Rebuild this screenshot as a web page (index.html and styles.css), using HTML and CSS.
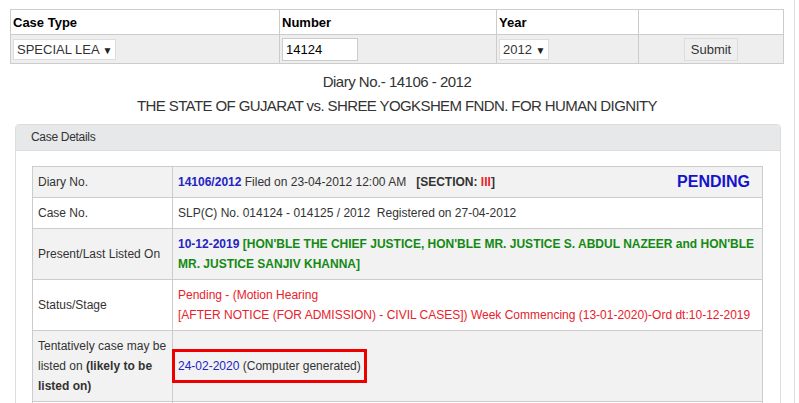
FILE: index.html
```html
<!DOCTYPE html>
<html lang="en">
<head>
    <meta charset="UTF-8">
    <title>Case Status</title>
    <link rel="stylesheet" href="styles.css">
</head>
<body>
    <div class="page">
        <!-- Search form -->
        <table class="search">
            <tr class="search-head">
                <th class="col-type">Case Type</th>
                <th class="col-num">Number</th>
                <th class="col-year">Year</th>
                <th></th>
            </tr>
            <tr class="search-row">
                <td><span class="fake-select">SPECIAL LEA <span class="arrow">&#9660;</span></span></td>
                <td><span class="fake-input">14124</span></td>
                <td><span class="fake-select">2012 <span class="arrow">&#9660;</span></span></td>
                <td class="btn-cell"><button class="submit">Submit</button></td>
            </tr>
        </table>

        <div class="diary">Diary No.- 14106 - 2012</div>
        <div class="parties">THE STATE OF GUJARAT vs. SHREE YOGKSHEM FNDN. FOR HUMAN DIGNITY</div>

        <!-- Case details panel -->
        <div class="panel">
            <div class="panel-head">Case Details</div>
            <div class="panel-body">
                <table class="details">
                    <tr class="odd">
                        <td class="label">Diary No.</td>
                        <td><span class="pending">PENDING</span><b class="blue">14106/2012</b> Filed on 23-04-2012 12:00 AM &nbsp;&nbsp;<b>[SECTION: <span class="red">III</span>]</b></td>
                    </tr>
                    <tr>
                        <td class="label">Case No.</td>
                        <td>SLP(C) No. 014124 - 014125 / 2012 &nbsp;Registered on 27-04-2012</td>
                    </tr>
                    <tr class="odd">
                        <td class="label">Present/Last Listed On</td>
                        <td><b class="blue">10-12-2019</b> <b class="green">[HON'BLE THE CHIEF JUSTICE, HON'BLE MR. JUSTICE S. ABDUL NAZEER and HON'BLE MR. JUSTICE SANJIV KHANNA]</b></td>
                    </tr>
                    <tr>
                        <td class="label">Status/Stage</td>
                        <td class="red">Pending - (Motion Hearing<br>[AFTER NOTICE (FOR ADMISSION) - CIVIL CASES]) Week Commencing (13-01-2020)-Ord dt:10-12-2019</td>
                    </tr>
                    <tr class="odd">
                        <td class="label">Tentatively case may be listed on <b>(likely to be listed on)</b></td>
                        <td class="tentative"><span class="boxed"><span class="blue">24-02-2020</span> (Computer generated)</span></td>
                    </tr>
                    <tr>
                        <td class="label">&nbsp;</td>
                        <td>&nbsp;</td>
                    </tr>
                </table>
            </div>
        </div>
    </div>
</body>
</html>
```

FILE: styles.css
```css
body {
    margin: 0;
    font-family: "Liberation Sans", Arial, sans-serif;
    font-size: 12px;
    color: #333;
    background: #fff;
}
.page {
    width: 795px;
    box-sizing: border-box;
    border-right: 1px solid #ddd;
    padding: 9px 10px 0 10px;
    min-height: 403px;
}
.search {
    border-collapse: collapse;
    width: 774px;
}
.search th,
.search td {
    border: 1px solid #ccc;
    text-align: left;
    padding: 0 2px;
}
.search-head th {
    height: 24px;
    font-weight: bold;
    color: #000;
    font-size: 13px;
}
.col-type { width: 264px; }
.col-num { width: 212px; }
.col-year { width: 137px; }
.search-row td {
    background: #eee;
    height: 28px;
    font-size: 13px;
}
.fake-select {
    display: inline-block;
    background: #fff;
    border: 1px solid #ddd;
    padding: 2px 3px;
    color: #333;
}
.arrow {
    font-size: 10px;
    color: #222;
}
.fake-input {
    display: inline-block;
    background: #fff;
    border: 1px solid #ccc;
    width: 68px;
    padding: 3px 3px;
    color: #000;
}
.btn-cell {
    text-align: center !important;
}
.submit {
    font-family: "Liberation Sans", Arial, sans-serif;
    font-size: 13px;
    color: #333;
    background: #efefef;
    border: 1px solid #ddd;
    padding: 3px 6px;
}
.diary,
.parties {
    text-align: center;
    font-size: 15px;
    color: #333;
    width: 774px;
}
.diary {
    margin-top: 9px;
    letter-spacing: -0.5px;
}
.parties {
    margin-top: 7px;
    letter-spacing: -0.6px;
}
.panel {
    margin: 10px 0 0 5px;
    width: 764px;
    border: 1px solid #ddd;
    border-radius: 4px;
}
.panel-head {
    background: #e6e8ea;
    border-bottom: 1px solid #ddd;
    height: 25px;
    line-height: 25px;
    padding-left: 15px;
    font-size: 12px;
    letter-spacing: -0.3px;
    color: #333;
}
.panel-body {
    padding: 15px 15px 15px 16px;
}
.details {
    border-collapse: collapse;
    width: 731px;
}
.details td {
    border: 1px solid #ccc;
    padding: 5px 5px;
    line-height: 20px;
    vertical-align: middle;
    background: #fff;
}
.details .odd td {
    background: #f2f2f2;
}
.details .label {
    width: 129px;
}
.blue { color: #2424c4; }
.red { color: #e8222b; }
.green { color: #138a13; }
.pending {
    float: right;
    font-weight: bold;
    font-size: 16px;
    color: #1414cc;
    margin-right: 7px;
}
.boxed {
    display: inline-block;
    border: 3px solid #e00;
    padding: 4px 3px;
    margin-left: -6px;
    line-height: 20px;
}
```
